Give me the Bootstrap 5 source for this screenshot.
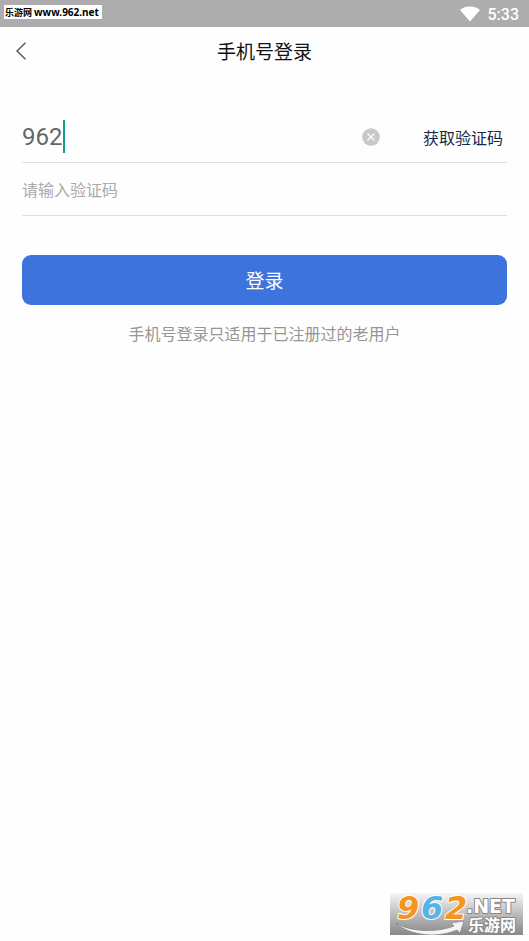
<!DOCTYPE html>
<html lang="zh-CN">
<head>
<meta charset="utf-8">
<meta name="viewport" content="width=device-width, initial-scale=1">
<title>手机号登录</title>
<link href="https://cdn.jsdelivr.net/npm/bootstrap@5.3.0/dist/css/bootstrap.min.css" rel="stylesheet">
<style>
body { font-family: "Noto Sans CJK SC", sans-serif; background: #fefefe; color: #111; }
.status-bar { height: 27px; background: #adadad; padding: 0 10px 0 4px; }
.site-tag { background: #fff; color: #000; font-weight: 700; font-size: 9px; line-height: 14px; height: 14px; width: 98px; margin-bottom: 3px; padding-left: 1px; }
.site-url { font-family: "Noto Sans", sans-serif; font-size: 10px; line-height: 14px; }
.clock { font-family: Roboto, sans-serif; font-size: 16px; line-height: 24px; font-weight: 500; padding-top: 2px; }
.title-bar { height: 48px; }
.title-bar h1 { font-size: 19px; line-height: 28px; font-weight: 400; }
.back-btn { left: 0; width: 44px; height: 48px; padding-left: 15px; }
.login-form { padding: 37px 22px 0; }
.field-row { border-bottom: 1px solid #dedede; }
.phone-row { height: 51px; }
.code-row { height: 53px; }
.plain-input, .plain-input:focus { border: 0; outline: 0; padding: 0; background: transparent; color: #666; box-shadow: none; min-width: 0; }
.phone-input { font-family: Roboto, sans-serif; font-size: 24px; line-height: 34px; height: 34px; }
.code-input { font-size: 16px; line-height: 24px; }
.code-input::placeholder { color: #aaa; opacity: 1; }
.text-caret { left: 41px; top: 0; width: 2px; height: 33px; background: #149c85; }
.clear-btn { margin-right: 43px; }
.send-code { font-size: 16px; line-height: 24px; color: #182848; margin-right: 4px; }
.login-btn, .login-btn:hover { height: 50px; margin-top: 39px; border: 0; border-radius: 9px; background: #3d73dc; color: #fff; font-size: 19px; line-height: 28px; }
.hint { font-size: 16px; line-height: 24px; color: #969696; margin-top: 16px; }
.brand { margin: 0 6px 6px 0; }
</style>
<script src="https://cdn.jsdelivr.net/npm/bootstrap@5.3.0/dist/js/bootstrap.bundle.min.js" defer></script>
</head>
<body class="min-vh-100 d-flex flex-column">
<div class="status-bar d-flex align-items-center justify-content-between">
  <div class="site-tag text-nowrap">乐游网 <span class="site-url">www.962.net</span></div>
  <div class="d-flex align-items-center gap-2 text-white">
    <svg width="20" height="16" viewBox="0 0 20 16" aria-hidden="true"><path d="M0 4C5.500-.6 14.500-.6 20 4L10 15.500Z" fill="#fff"/></svg>
    <span class="clock">5:33</span>
  </div>
</div>
<header class="title-bar position-relative d-flex align-items-center justify-content-center">
  <button type="button" class="back-btn btn border-0 position-absolute py-0 pe-0 d-flex align-items-center" aria-label="返回">
    <svg width="12" height="18" viewBox="0 0 12 18" fill="none" stroke="#555" stroke-width="1.400"><path d="M10.500 .8L2 9L10.500 17.200"/></svg>
  </button>
  <h1 class="mb-0">手机号登录</h1>
</header>
<main class="flex-grow-1">
  <form class="login-form">
    <div class="field-row phone-row d-flex align-items-center">
      <div class="position-relative flex-grow-1 d-flex">
        <input class="plain-input phone-input w-100" type="tel" value="962" aria-label="手机号">
        <span class="text-caret position-absolute" aria-hidden="true"></span>
      </div>
      <button type="button" class="clear-btn btn border-0 p-0 d-flex" aria-label="清除">
        <svg width="18" height="18" viewBox="0 0 18 18"><circle cx="9" cy="9" r="8.800" fill="#c8c8c8"/><path d="M5.500 5.500L12.500 12.500M12.500 5.500L5.500 12.500" stroke="#fff" stroke-width="1.300"/></svg>
      </button>
      <button type="button" class="send-code btn border-0 p-0">获取验证码</button>
    </div>
    <div class="field-row code-row d-flex align-items-center">
      <input class="plain-input code-input w-100" type="text" placeholder="请输入验证码" aria-label="验证码">
    </div>
    <button type="submit" class="login-btn btn w-100 p-0">登录</button>
    <p class="hint text-center mb-0">手机号登录只适用于已注册过的老用户</p>
  </form>
</main>
<footer class="d-flex justify-content-end">
  <svg class="brand" width="133" height="50" viewBox="0 -8 133 50" role="img" aria-label="962.NET 乐游网">
    <defs>
      <linearGradient id="shade" x1="0" y1="0" x2="0" y2="1"><stop offset="0" stop-color="#f6f6f6"/><stop offset=".5" stop-color="#bdbdbd"/><stop offset="1" stop-color="#888"/></linearGradient>
    </defs>
    <rect width="133" height="42" fill="url(#shade)"/>
    <path d="M6 30C20 39 46 40 64 33L61 30L74 28L70 40L67 37C46 46 18 42 6 30Z" fill="#f4f4f4" stroke="#777" stroke-width=".6"/>
    <g paint-order="stroke" stroke-linejoin="round" font-weight="700">
      <g font-family="DejaVu Sans, sans-serif" font-style="italic" font-size="32" stroke-width="2">
        <g stroke="#fff">
        <text x="7" y="26" fill="#f7941e">9</text>
        <text x="31" y="26" fill="#57b2e8">6</text>
        <text x="55" y="26" fill="#f7941e">2</text>
        </g>
      </g>
      <text x="76" y="20" font-family="DejaVu Sans, sans-serif" font-size="19" fill="#fff" stroke="#888" stroke-width="2">.NET</text>
      <text x="78" y="38" font-family="Noto Sans CJK SC, sans-serif" font-size="16" fill="#fff" stroke="#888" stroke-width="2">乐游网</text>
    </g>
  </svg>
</footer>
</body>
</html>
